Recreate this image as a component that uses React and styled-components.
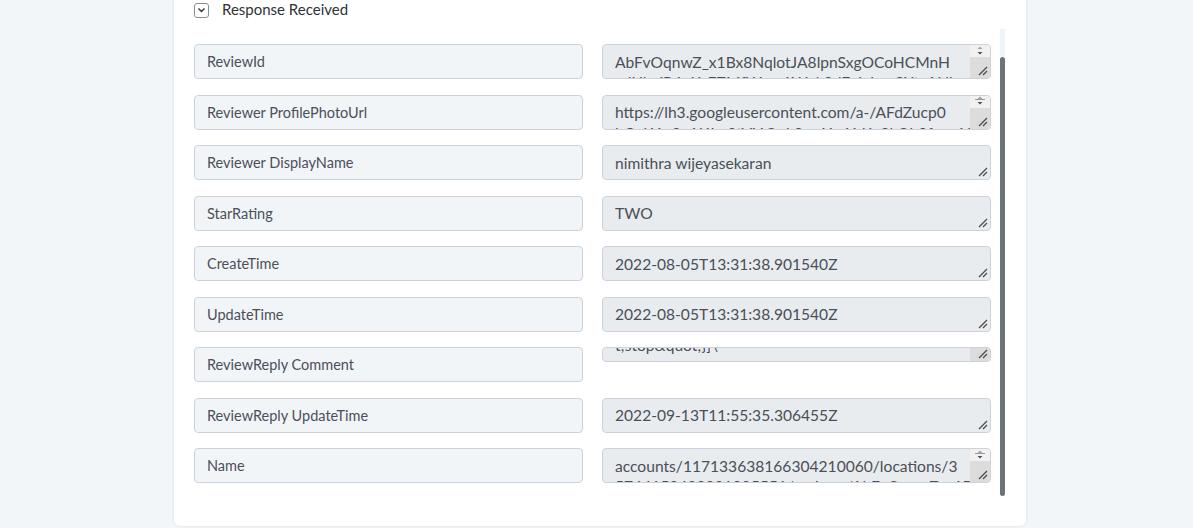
import styled, { createGlobalStyle } from "styled-components";

const GlobalStyle = createGlobalStyle`
  html {
    overflow: hidden;
  }
  body {
    margin: 0;
    padding: 0;
    background: #f3f6f9;
    font-family: Lato, "Open Sans", "Liberation Sans", sans-serif;
  }
`;

const fields = [
  {
    label: "ReviewId",
    lines: ["AbFvOqnwZ_x1Bx8NqlotJA8lpnSxgOCoHCMnH", "vdUkpjR4uKcEZMfWwq1Wpk8dFqjgLcoCXtaANk"],
    scroll: true,
  },
  {
    label: "Reviewer ProfilePhotoUrl",
    lines: ["https://lh3.googleusercontent.com/a-/AFdZucp0", "hGqkYw2wWJm3tVj4Oqk9xwYxvYzKp8kQb0fg=s120"],
    scroll: true,
    lined: true,
  },
  { label: "Reviewer DisplayName", lines: ["nimithra wijeyasekaran"] },
  { label: "StarRating", lines: ["TWO"] },
  { label: "CreateTime", lines: ["2022-08-05T13:31:38.901540Z"] },
  { label: "UpdateTime", lines: ["2022-08-05T13:31:38.901540Z"] },
  { label: "ReviewReply Comment", lines: ["t;stop&quot;}]\\"], squashed: true },
  { label: "ReviewReply UpdateTime", lines: ["2022-09-13T11:55:35.306455Z"] },
  {
    label: "Name",
    lines: ["accounts/117133638166304210060/locations/3", "5744150429901005551/reviews/AbFvOqnwZ_x1Bx"],
    scroll: true,
    lined: true,
  },
];

function Grip() {
  return (
    <GripIcon width="11" height="11" viewBox="0 0 11 11">
      <path d="M10 2 L2 10 M10 6 L6 10" stroke="#4d4d4d" strokeWidth="1.3" fill="none" />
    </GripIcon>
  );
}

function Spinner({ lined }) {
  return (
    <SpinBox>
      <svg width="12" height="11" viewBox="0 0 12 11">
        {lined && <path d="M1 3.5 H11" stroke="#9a9a9a" strokeWidth="1" />}
        <path d="M3.5 3 L6 0.5 L8.5 3 Z" fill="#a3a3a3" />
        <path d="M3.5 6 L6 8.5 L8.5 6 Z" fill="#505050" />
      </svg>
    </SpinBox>
  );
}

function ValueField({ lines, scroll, lined, squashed }) {
  return (
    <ValueBox $squashed={squashed}>
      <ValueText $squashed={squashed}>
        {lines.map((l, i) => (
          <Line key={i}>{l}</Line>
        ))}
      </ValueText>
      {(scroll || squashed) && (
        <Strip>
          {scroll && <Spinner lined={lined} />}
        </Strip>
      )}
      <Grip />
    </ValueBox>
  );
}

export default function App() {
  return (
    <>
      <GlobalStyle />
      <Page>
        <Card>
          <Header>
            <Toggle>
              <svg width="9" height="6" viewBox="0 0 9 6">
                <path d="M1.5 1.5 L4.5 4.5 L7.5 1.5" stroke="#333" strokeWidth="1.4" fill="none" />
              </svg>
            </Toggle>
            <Title>Response Received</Title>
          </Header>
          <ScrollArea>
            <FieldGrid>
              {fields.map((f) => (
                <Row key={f.label}>
                  <LabelBox>{f.label}</LabelBox>
                  <ValueField {...f} />
                </Row>
              ))}
            </FieldGrid>
            <ScrollTrack>
              <ScrollThumb />
            </ScrollTrack>
          </ScrollArea>
        </Card>
      </Page>
    </>
  );
}

const Page = styled.div`
  padding-left: 174px;
  padding-bottom: 20px;
`;

const Card = styled.div`
  width: 852px;
  margin-top: -13px;
  padding: 15px 21px 30px 20px;
  box-sizing: border-box;
  background: #fff;
  border-radius: 0 0 6px 6px;
  box-shadow: 0 0 3px rgba(40, 50, 70, 0.14);
`;

const Header = styled.div`
  display: flex;
  align-items: center;
  height: 16px;
  gap: 13px;
`;

const Toggle = styled.div`
  width: 15px;
  height: 15px;
  box-sizing: border-box;
  border: 1px solid #8a8f96;
  border-radius: 3px;
  display: flex;
  align-items: center;
  justify-content: center;
`;

const Title = styled.span`
  font-size: 15px;
  line-height: 16px;
  color: #2f3236;
  margin-top: -2px;
`;

const ScrollArea = styled.div`
  display: flex;
  gap: 9px;
  margin-top: 11px;
`;

const FieldGrid = styled.div`
  flex: 1;
  display: flex;
  flex-direction: column;
  gap: 15.5px;
  padding: 15px 0 13px;
`;

const Row = styled.div`
  display: grid;
  grid-template-columns: 389px 389px;
  column-gap: 19px;
  align-items: start;
`;

const LabelBox = styled.div`
  height: 35px;
  box-sizing: border-box;
  padding: 0 12px;
  display: flex;
  align-items: center;
  background: #f2f5f8;
  border: 1px solid #cdd2da;
  border-radius: 4px;
  font-size: 14.5px;
  color: #4b5058;
`;

const ValueBox = styled.div`
  position: relative;
  height: ${(p) => (p.$squashed ? "15px" : "35px")};
  box-sizing: border-box;
  overflow: hidden;
  background: #e9ecef;
  border: 1px solid #cdd2da;
  border-radius: 4px;
`;

const ValueText = styled.div`
  padding: ${(p) => (p.$squashed ? "0 32px 0 12px" : "6.5px 32px 0 12px")};
  margin-top: ${(p) => (p.$squashed ? "-13px" : "0")};
  font-size: 15.6px;
  line-height: 20.5px;
  color: #4a5057;
`;

const Line = styled.div`
  white-space: nowrap;
`;

const Strip = styled.div`
  position: absolute;
  top: 0;
  right: 0;
  bottom: 0;
  width: 20px;
  background: #dcdcdc;
`;

const SpinBox = styled.div`
  height: 12px;
  background: #f1f1f1;
  display: flex;
  align-items: center;
  justify-content: center;
`;

const GripIcon = styled.svg`
  position: absolute;
  right: 2px;
  bottom: 2px;
`;

const ScrollTrack = styled.div`
  width: 7px;
  background: linear-gradient(#eef4fc 0, #eef4fc 28px, transparent 28px);
  display: flex;
  flex-direction: column;
`;

const ScrollThumb = styled.div`
  margin-top: 28px;
  flex: 1;
  background: #6c737b;
  border-radius: 4px;
`;
